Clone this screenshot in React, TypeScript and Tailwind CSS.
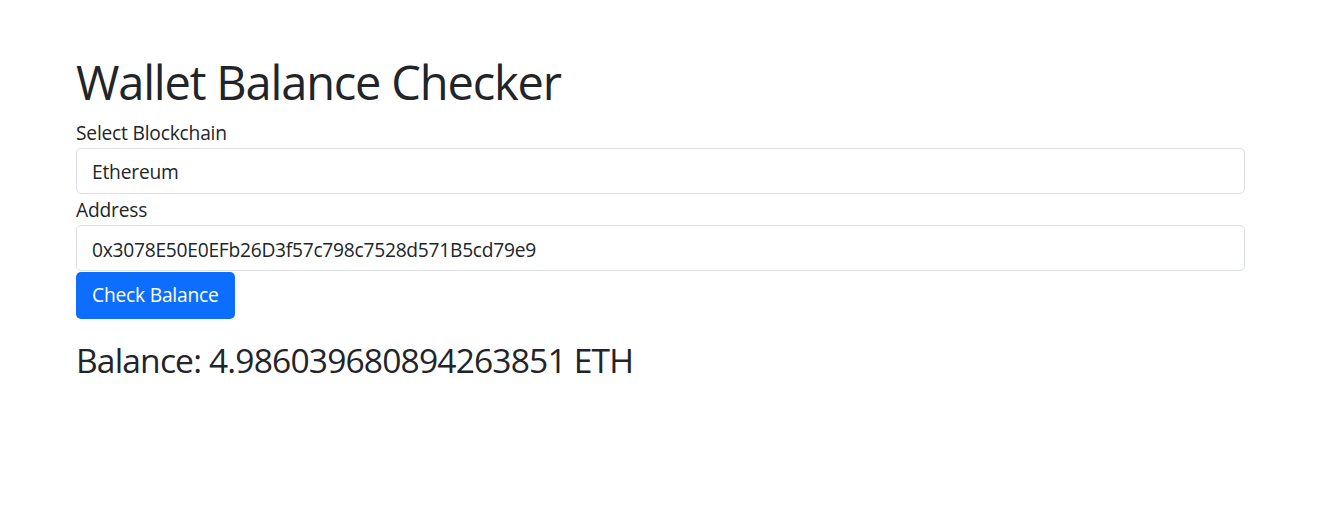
export default function App() {
  return (
    <div
      className="min-h-screen bg-white text-[#212529]"
      style={{ fontFamily: '"Open Sans", "Noto Sans", sans-serif' }}
    >
      <div className="pl-[76px] pr-[72px] pt-[53px]">
        <h1 className="mb-[6px] text-[47px] leading-[58px] font-normal tracking-tight">
          Wallet Balance Checker
        </h1>
        <label className="block text-[19.2px] leading-[31px] tracking-[-0.2px]">
          Select Blockchain
        </label>
        <select
          className="block h-[46px] w-full appearance-none rounded-[5px] border border-[#dee2e6] bg-white px-[15px] pt-[2px] text-[19.2px] leading-[28.8px] tracking-[-0.2px] text-[#212529] outline-none"
          defaultValue="eth"
        >
          <option value="eth">Ethereum</option>
          <option value="bsc">Binance Smart Chain</option>
        </select>
        <label className="block text-[19.2px] leading-[31px] tracking-[-0.2px]">Address</label>
        <input
          className="block h-[46px] w-full rounded-[5px] border border-[#dee2e6] bg-white px-[15px] pt-[3px] text-[19.2px] leading-[28.8px] tracking-[-0.25px] text-[#212529] outline-none"
          defaultValue="0x3078E50E0EFb26D3f57c798c7528d571B5cd79e9"
        />
        <button className="mt-px h-[47px] rounded-[5px] bg-[#0d6efd] px-[16px] text-[19.2px] leading-[28.8px] tracking-[-0.2px] text-white">
          Check Balance
        </button>
        <h3 className="mt-[20px] text-[33.6px] leading-[42px] font-normal tracking-tight">
          Balance: 4.986039680894263851 ETH
        </h3>
      </div>
    </div>
  );
}
